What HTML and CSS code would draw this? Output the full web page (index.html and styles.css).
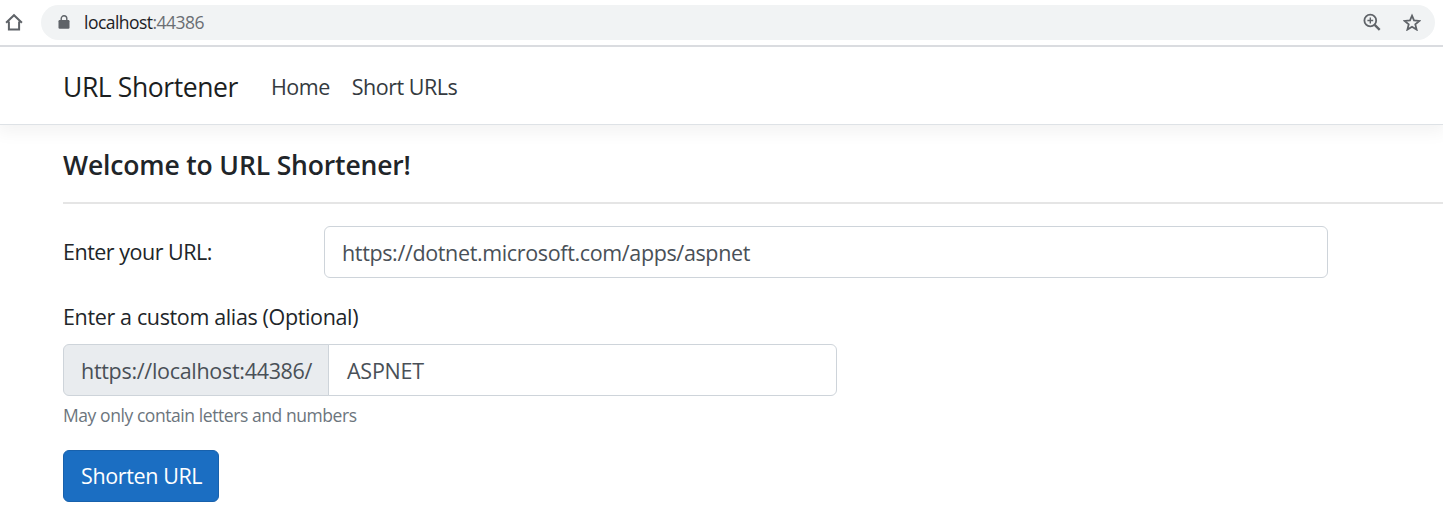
FILE: index.html
```html
<!DOCTYPE html>
<html lang="en">
<head>
<meta charset="utf-8">
<title>URL Shortener</title>
<link rel="stylesheet" href="styles.css">
</head>
<body>
<div class="toolbar">
  <svg class="home" width="18" height="18" viewBox="0 0 18 18" fill="none" stroke="#5f6368" stroke-width="2"><path d="M1.1 9.8 9 2.2l7.9 7.6M3.9 8.4v8.2h10.2V8.4"/></svg>
  <div class="address">
    <svg class="lock" width="12" height="14" viewBox="0 0 12 14"><rect x=".5" y="5" width="11" height="8.7" rx="1.2" fill="#5f6368"/><path d="M3.2 5.5V3.6a2.8 2.8 0 0 1 5.6 0v1.9" fill="none" stroke="#5f6368" stroke-width="1.4"/></svg>
    <span class="host">localhost<span class="port">:44386</span></span>
    <svg class="magnifier" width="18" height="18" viewBox="0 0 18 18" fill="none" stroke="#5f6368"><circle cx="7.3" cy="7.5" r="5.9" stroke-width="1.8"/><path d="m11.7 11.9 5 5" stroke-width="2.3"/><path d="M4.4 7.5h5.8M7.3 4.6v5.8" stroke-width="1.4"/></svg>
    <svg class="star" width="18" height="18" viewBox="0 0 18 18" fill="none" stroke="#5f6368" stroke-width="1.8"><path d="m9 2.7 2 4.7 5.4.5-4.1 3.5 1.3 5.2L9 13.8l-4.6 2.8 1.3-5.2-4.1-3.5L7 7.4z"/></svg>
  </div>
</div>
<header class="navbar">
  <a class="brand">URL Shortener</a>
  <nav class="links"><a class="link-home">Home</a><a class="link-urls">Short URLs</a></nav>
</header>
<main class="content">
  <h1 class="title"><span>Welcome to URL Shortener!</span></h1>
  <div class="url-row">
    <label class="url-label">Enter your URL:</label>
    <div class="field url-field"><span class="url-value">https://dotnet.microsoft.com/apps/aspnet</span></div>
  </div>
  <label class="alias-label">Enter a custom alias (Optional)</label>
  <div class="alias-group">
    <div class="prefix"><span class="prefix-text">https://localhost:44386/</span></div>
    <div class="field alias-field"><span class="alias-value">ASPNET</span></div>
  </div>
  <small class="hint">May only contain letters and numbers</small>
  <button class="submit"><span class="submit-text">Shorten URL</span></button>
</main>
</body>
</html>
```
FILE: styles.css
```css
* { box-sizing: border-box; }
body {
  margin: 0;
  height: 530px;
  overflow: hidden;
  background: #fff;
  color: #212529;
  font: 21.5px/33px "Open Sans", "Noto Sans", sans-serif;
  letter-spacing: -.36px;
}
.toolbar {
  display: flex;
  align-items: center;
  height: 47px;
  padding: 0 8px 1px 5px;
  border-bottom: 2px solid #dadce0;
}
.home { margin-right: 18px; }
.address {
  display: flex;
  align-items: center;
  flex: 1;
  height: 35px;
  padding: 0 14px 0 17px;
  border-radius: 18px;
  background: #f1f3f4;
}
.host { margin-left: 14px; font-size: 17.5px; letter-spacing: -.53px; color: #202124; }
.port { color: #6a6e73; }
.magnifier { margin-left: auto; }
.star { margin-left: 22px; }
.navbar {
  display: flex;
  align-items: center;
  height: 78px;
  padding: 2px 63px 0;
  border-bottom: 1px solid #dee2e6;
  box-shadow: 0 4px 16px 3px rgba(0, 0, 0, .05);
  clip-path: inset(0 0 -30px);
}
.brand { width: 208px; padding-top: 1px; font-size: 26.5px; letter-spacing: -.4px; color: #1b1e21; white-space: nowrap; }
.links { display: flex; gap: 22px; margin-top: -1px; color: #343a40; }
.link-home, .link-urls { letter-spacing: -.5px; }
.content { padding-left: 63px; }
.title {
  height: 79px;
  margin: 0;
  padding-top: 22px;
  border-bottom: 2px solid #e5e5e5;
  font-size: 26.5px;
  font-weight: 600;
  line-height: 36px;
  letter-spacing: -.15px;
}
.url-row { display: flex; align-items: center; margin-top: 22px; }
.url-label { width: 261px; padding-bottom: 2px; letter-spacing: -.5px; }
.field, .prefix {
  display: flex;
  align-items: center;
  height: 52px;
  padding: 0 17px;
  border: 1px solid #ced4da;
  color: #495057;
}
.url-field { width: 1004px; border-radius: 6px; }
.alias-label { display: block; margin-top: 22px; }
.alias-group { display: flex; width: 774px; margin-top: 11px; }
.prefix { width: 266px; border-radius: 6px 0 0 6px; background: #e9ecef; letter-spacing: -.3px; }
.alias-field { flex: 1; margin-left: -1px; padding-left: 18px; border-radius: 0 6px 6px 0; letter-spacing: -.25px; }
.hint { display: block; height: 26px; margin-top: 6px; font-size: 17.5px; line-height: 27px; letter-spacing: -.43px; color: #6c757d; }
.submit {
  display: flex;
  align-items: center;
  width: 156px;
  height: 52px;
  margin-top: 22px;
  padding: 0 17px 1px;
  border: 1px solid #1861ac;
  border-radius: 6px;
  background: #1b6ec2;
  color: #fff;
  font: inherit;
  letter-spacing: -.38px;
}
.submit-text { white-space: nowrap; }
```
